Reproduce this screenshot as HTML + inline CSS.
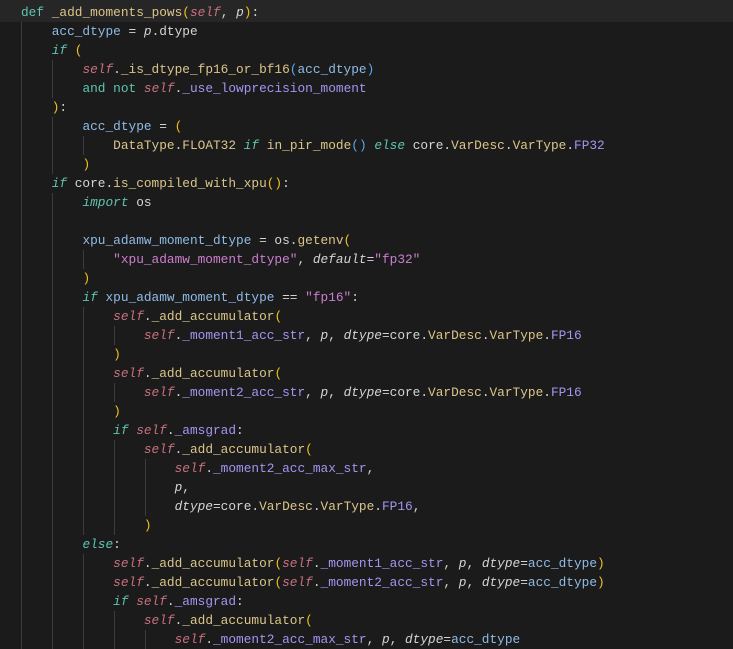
<!DOCTYPE html>
<html><head><meta charset="utf-8"><style>
html,body{margin:0;padding:0;background:#1b1b1b;width:733px;height:644px;overflow:hidden}
.hl{position:absolute;left:0;top:0;width:733px;height:22px;background:#262626}
.code{position:absolute;left:21px;top:3px;font-family:"Liberation Mono",monospace;font-size:12.8px;color:#d4d4d4}
.l{position:relative;height:19px;line-height:19px;white-space:pre}
.l i{position:absolute;left:0;top:0;height:19px;background:repeating-linear-gradient(to right,#3c3c3c 0 1px,transparent 1px 31px)}
.k{color:#5fc4b0}.ki{color:#5fc4b0;font-style:italic}
.s{color:#c9707f;font-style:italic}
.f{color:#dcc58a}.c{color:#dcc58a}
.v{color:#8fbbe6}.a{color:#a594f0}
.st{color:#cc7fcf}.p{font-style:italic;color:#d4d4d4}
.b{color:#f0c020}.b2{color:#55a8f0}
</style></head><body>
<div class="hl"></div>
<div class="code">
<div class="l"><span class="k">def</span> <span class="f">_add_moments_pows</span><span class="b">(</span><span class="s">self</span>, <span class="p">p</span><span class="b">)</span>:</div>
<div class="l"><i style="width:31px"></i>    <span class="v">acc_dtype</span> = <span class="p">p</span>.dtype</div>
<div class="l"><i style="width:31px"></i>    <span class="ki">if</span> <span class="b">(</span></div>
<div class="l"><i style="width:62px"></i>        <span class="s">self</span>.<span class="f">_is_dtype_fp16_or_bf16</span><span class="b2">(</span><span class="v">acc_dtype</span><span class="b2">)</span></div>
<div class="l"><i style="width:62px"></i>        <span class="k">and not</span> <span class="s">self</span>.<span class="a">_use_lowprecision_moment</span></div>
<div class="l"><i style="width:31px"></i>    <span class="b">)</span>:</div>
<div class="l"><i style="width:62px"></i>        <span class="v">acc_dtype</span> = <span class="b">(</span></div>
<div class="l"><i style="width:93px"></i>            <span class="c">DataType</span>.<span class="c">FLOAT32</span> <span class="ki">if</span> <span class="f">in_pir_mode</span><span class="b2">()</span> <span class="ki">else</span> core.<span class="c">VarDesc</span>.<span class="c">VarType</span>.<span class="a">FP32</span></div>
<div class="l"><i style="width:62px"></i>        <span class="b">)</span></div>
<div class="l"><i style="width:31px"></i>    <span class="ki">if</span> core.<span class="f">is_compiled_with_xpu</span><span class="b">()</span>:</div>
<div class="l"><i style="width:62px"></i>        <span class="ki">import</span> os</div>
<div class="l"><i style="width:62px"></i></div>
<div class="l"><i style="width:62px"></i>        <span class="v">xpu_adamw_moment_dtype</span> = os.<span class="f">getenv</span><span class="b">(</span></div>
<div class="l"><i style="width:93px"></i>            <span class="st">"xpu_adamw_moment_dtype"</span>, <span class="p">default</span>=<span class="st">"fp32"</span></div>
<div class="l"><i style="width:62px"></i>        <span class="b">)</span></div>
<div class="l"><i style="width:62px"></i>        <span class="ki">if</span> <span class="v">xpu_adamw_moment_dtype</span> == <span class="st">"fp16"</span>:</div>
<div class="l"><i style="width:93px"></i>            <span class="s">self</span>.<span class="f">_add_accumulator</span><span class="b">(</span></div>
<div class="l"><i style="width:124px"></i>                <span class="s">self</span>.<span class="a">_moment1_acc_str</span>, <span class="p">p</span>, <span class="p">dtype</span>=core.<span class="c">VarDesc</span>.<span class="c">VarType</span>.<span class="a">FP16</span></div>
<div class="l"><i style="width:93px"></i>            <span class="b">)</span></div>
<div class="l"><i style="width:93px"></i>            <span class="s">self</span>.<span class="f">_add_accumulator</span><span class="b">(</span></div>
<div class="l"><i style="width:124px"></i>                <span class="s">self</span>.<span class="a">_moment2_acc_str</span>, <span class="p">p</span>, <span class="p">dtype</span>=core.<span class="c">VarDesc</span>.<span class="c">VarType</span>.<span class="a">FP16</span></div>
<div class="l"><i style="width:93px"></i>            <span class="b">)</span></div>
<div class="l"><i style="width:93px"></i>            <span class="ki">if</span> <span class="s">self</span>.<span class="a">_amsgrad</span>:</div>
<div class="l"><i style="width:124px"></i>                <span class="s">self</span>.<span class="f">_add_accumulator</span><span class="b">(</span></div>
<div class="l"><i style="width:155px"></i>                    <span class="s">self</span>.<span class="a">_moment2_acc_max_str</span>,</div>
<div class="l"><i style="width:155px"></i>                    <span class="p">p</span>,</div>
<div class="l"><i style="width:155px"></i>                    <span class="p">dtype</span>=core.<span class="c">VarDesc</span>.<span class="c">VarType</span>.<span class="a">FP16</span>,</div>
<div class="l"><i style="width:124px"></i>                <span class="b">)</span></div>
<div class="l"><i style="width:62px"></i>        <span class="ki">else</span>:</div>
<div class="l"><i style="width:93px"></i>            <span class="s">self</span>.<span class="f">_add_accumulator</span><span class="b">(</span><span class="s">self</span>.<span class="a">_moment1_acc_str</span>, <span class="p">p</span>, <span class="p">dtype</span>=<span class="v">acc_dtype</span><span class="b">)</span></div>
<div class="l"><i style="width:93px"></i>            <span class="s">self</span>.<span class="f">_add_accumulator</span><span class="b">(</span><span class="s">self</span>.<span class="a">_moment2_acc_str</span>, <span class="p">p</span>, <span class="p">dtype</span>=<span class="v">acc_dtype</span><span class="b">)</span></div>
<div class="l"><i style="width:93px"></i>            <span class="ki">if</span> <span class="s">self</span>.<span class="a">_amsgrad</span>:</div>
<div class="l"><i style="width:124px"></i>                <span class="s">self</span>.<span class="f">_add_accumulator</span><span class="b">(</span></div>
<div class="l"><i style="width:155px"></i>                    <span class="s">self</span>.<span class="a">_moment2_acc_max_str</span>, <span class="p">p</span>, <span class="p">dtype</span>=<span class="v">acc_dtype</span></div>
</div>
</body></html>
